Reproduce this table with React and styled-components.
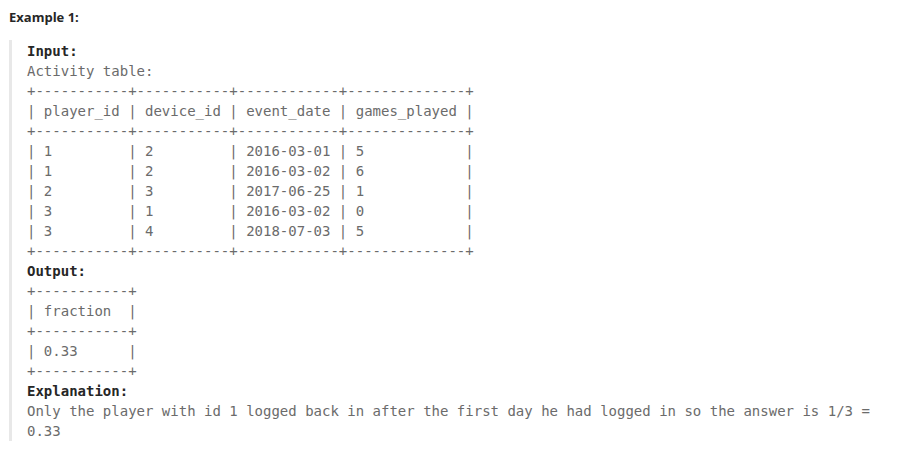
import React from 'react'
import styled, { createGlobalStyle } from 'styled-components'

const GlobalStyle = createGlobalStyle`
  body {
    margin: 0;
    background: #ffffff;
  }
`

const Page = styled.div`
  padding: 8px 22px 0 9px;
  font-family: "Open Sans", "Noto Sans", sans-serif;
`

const Title = styled.p`
  margin: 0 0 14px;
  font-size: 13px;
  line-height: 18px;
  font-weight: 700;
  color: #262626;
`

const Block = styled.pre`
  margin: 0;
  padding: 1px 0 0 15px;
  border-left: 3px solid #e8e8e8;
  font-family: "DejaVu Sans Mono", monospace;
  font-size: 14px;
  line-height: 20px;
  color: #6b6b6b;
  white-space: pre-wrap;
`

const Label = styled.strong`
  font-weight: 700;
  color: #262626;
`

const activity = `+-----------+-----------+------------+--------------+
| player_id | device_id | event_date | games_played |
+-----------+-----------+------------+--------------+
| 1         | 2         | 2016-03-01 | 5            |
| 1         | 2         | 2016-03-02 | 6            |
| 2         | 3         | 2017-06-25 | 1            |
| 3         | 1         | 2016-03-02 | 0            |
| 3         | 4         | 2018-07-03 | 5            |
+-----------+-----------+------------+--------------+`

const result = `+-----------+
| fraction  |
+-----------+
| 0.33      |
+-----------+`

export default function App() {
  return (
    <>
      <GlobalStyle />
      <Page>
        <Title>Example 1:</Title>
        <Block>
          <Label>Input:</Label>{'\n'}
          {'Activity table:\n'}
          {activity}{'\n'}
          <Label>Output:</Label>{'\n'}
          {result}{'\n'}
          <Label>Explanation:</Label>{'\n'}
          Only the player with id 1 logged back in after the first day he had logged in so the answer is 1/3 = 0.33
        </Block>
      </Page>
    </>
  )
}
